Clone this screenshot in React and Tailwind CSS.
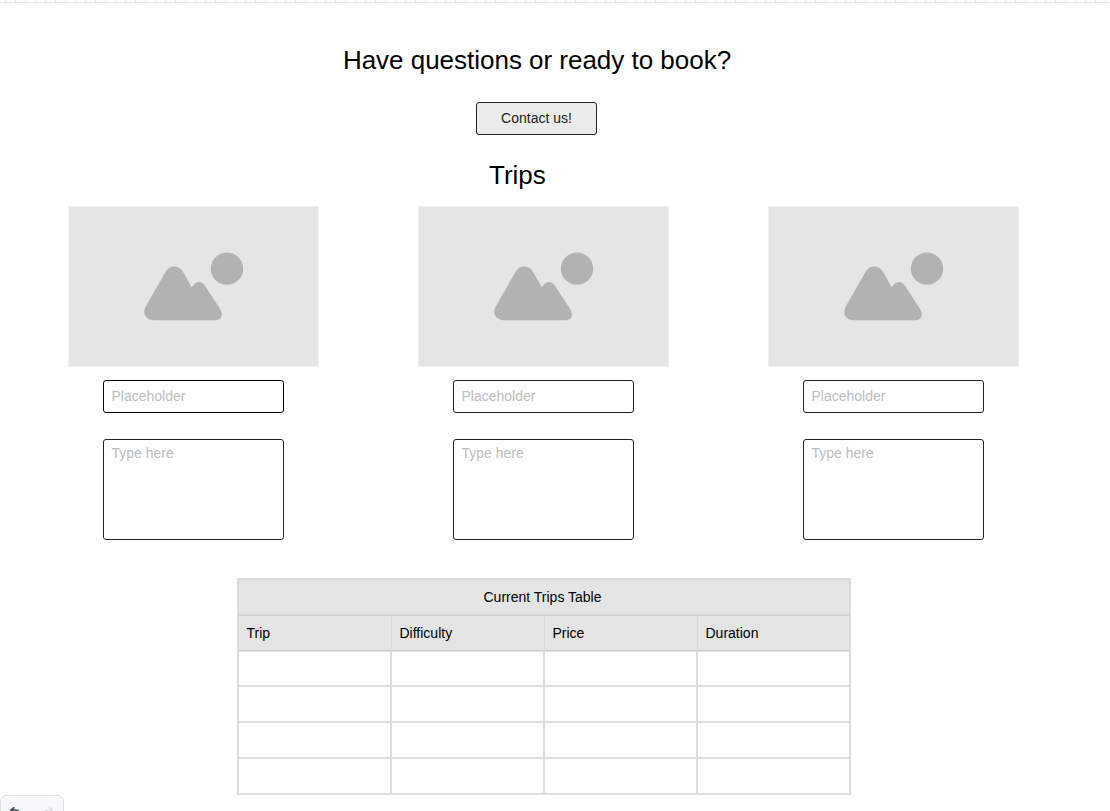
const trips = [
  { id: 'a', input: 'border-black' },
  { id: 'b', input: 'border-[#222]' },
  { id: 'c', input: 'border-[#222]' },
];

const columns = ['Trip', 'Difficulty', 'Price', 'Duration'];
const rowHeights = ['h-[33px]', 'h-[34px]', 'h-[34px]', 'h-[34px]'];

function Ruler() {
  return (
    <div className="flex h-[3px] w-full shrink-0 overflow-hidden border-b border-[#e8e8ef] pl-[5px]">
      {Array.from({ length: 111 }, (_, i) => (
        <span key={i} className="h-[2px] w-[10px] shrink-0 border-l border-[#e8e8ef]" />
      ))}
    </div>
  );
}

function ImagePlaceholder() {
  return (
    <div className="h-[161px] w-[251px] border border-[#efefef] bg-[#e5e5e5]">
      <svg viewBox="27 21 747 477" className="block h-[159px] w-[249px]" fill="#b2b2b2">
        <path d="M317 215 C328 194 356 194 369 215 L395 262 L399 257 C411 241 427 242 437 260 L480 326 C492 346 484 361 464 361 L285 361 C257 361 245 341 258 318 Z" />
        <circle cx="501" cy="206" r="48.5" />
      </svg>
    </div>
  );
}

function TripCard({ inputBorder }) {
  return (
    <div className="flex w-[251px] flex-col items-center">
      <ImagePlaceholder />
      <div className={`mt-[13px] h-[33px] w-[181px] rounded-[3px] border bg-white px-[7.5px] pt-[7px] ${inputBorder}`}>
        <span className="block text-[14px] leading-[16px] text-[#bdbdbd]">Placeholder</span>
      </div>
      <div className="mt-[26px] h-[101px] w-[181px] rounded-[3px] border border-[#222] bg-white px-[7.5px] pt-[5px]">
        <span className="block text-[14px] leading-[16px] text-[#bdbdbd]">Type here</span>
      </div>
    </div>
  );
}

function TripsTable() {
  return (
    <div className="ml-[237px] mt-[38px] flex w-[614px] flex-col gap-[2px] bg-[#dedede] p-[2px]">
      <div className="-mx-px -mt-px flex h-[36px] items-center justify-center border border-[#d9d9d9] bg-[#e4e4e4] pr-[3px] text-[14px] leading-[16px] text-black">
        Current Trips Table
      </div>
      <div className="-mx-px -mb-px -mt-[2px] grid grid-cols-[152px_152px_152px_151px] gap-x-px border border-x-[#d9d9d9] border-y-[#d0d0d0] bg-[#d7d7d7]">
        {columns.map((name) => (
          <div key={name} className="flex h-[34px] items-center bg-[#e4e4e4] pl-[7.5px] text-[14px] leading-[16px] text-black">
            {name}
          </div>
        ))}
      </div>
      {rowHeights.map((height, row) => (
        <div key={row} className="grid grid-cols-[151px_151px_151px_151px] gap-x-[2px]">
          {columns.map((name) => (
            <div key={name} className={`bg-white ${height}`} />
          ))}
        </div>
      ))}
    </div>
  );
}

function HistoryBar() {
  return (
    <div className="absolute left-0 top-[795px] flex h-[30px] w-[64px] items-start justify-between rounded-[6px] border border-[#dfe2e6] bg-[#f7f8fa] px-[9px] pt-[11px]">
      <svg viewBox="0 0 10 10" className="h-[10px] w-[10px]" fill="none" stroke="#3c4650" strokeWidth="1.6">
        <path d="M4.5 0.3 L1 3 L4.5 5.8" />
        <path d="M1 3 H6 C8 3 9 4.5 9 6.5" />
      </svg>
      <svg viewBox="0 0 10 10" className="h-[10px] w-[10px]" fill="none" stroke="#dfe1e4" strokeWidth="1.6">
        <path d="M5.5 0.3 L9 3 L5.5 5.8" />
        <path d="M9 3 H4 C2 3 1 4.5 1 6.5" />
      </svg>
    </div>
  );
}

export default function App() {
  return (
    <div className="relative flex h-[811px] w-[1110px] flex-col overflow-hidden bg-white font-['Liberation_Sans',Arial,sans-serif]">
      <Ruler />
      <header className="flex w-[1073px] flex-col items-center pt-[42px]">
        <h1 className="whitespace-nowrap pl-[1px] text-[26px] leading-[30px] tracking-[-0.02px] text-black">Have questions or ready to book?</h1>
        <button className="mt-[27px] flex h-[33px] w-[121px] items-start justify-center rounded-[3px] border border-[#222] bg-[#ebebeb] pt-[7px] text-[14px] leading-[16px] text-[#222]">
          Contact us!
        </button>
      </header>
      <h2 className="ml-[489px] mt-[25px] text-[26px] leading-[30px] text-black">Trips</h2>
      <section className="ml-[68px] mt-[16px] flex gap-[99px]">
        {trips.map((trip) => (
          <TripCard key={trip.id} inputBorder={trip.input} />
        ))}
      </section>
      <TripsTable />
      <HistoryBar />
    </div>
  );
}
